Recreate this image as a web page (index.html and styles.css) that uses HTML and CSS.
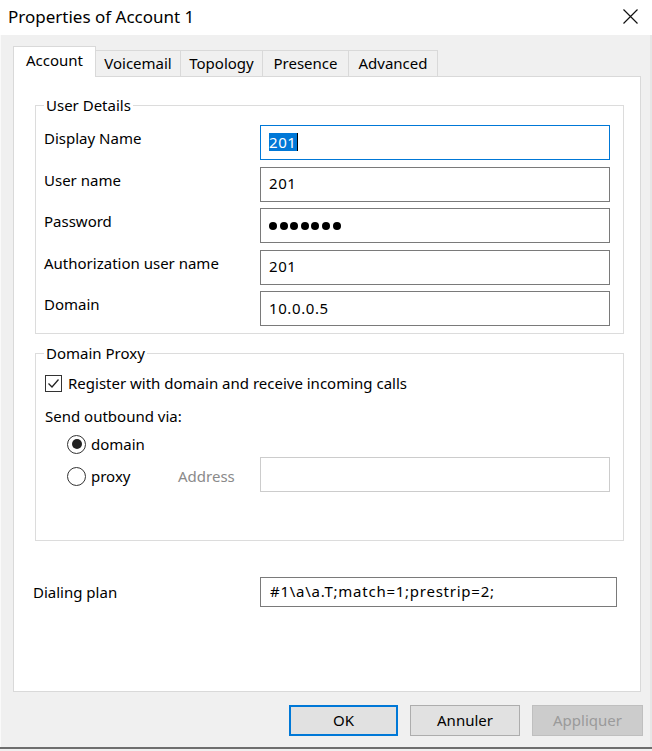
FILE: index.html
```html
<!DOCTYPE html>
<html lang="en">
<head>
<meta charset="utf-8">
<title>Properties of Account 1</title>
<link rel="stylesheet" href="styles.css">
</head>
<body>
<div class="window">
  <div class="titlebar">
    <span class="title">Properties of Account 1</span>
    <svg class="close" viewBox="0 0 15 15" aria-label="Close"><path d="M0.5 0.5 L14.5 14.5 M14.5 0.5 L0.5 14.5" stroke="#111" stroke-width="1.2" fill="none"/></svg>
  </div>
  <div class="client">
    <div class="tabs">
      <div class="tab tab-account active">Account</div>
      <div class="tab tab-voicemail">Voicemail</div>
      <div class="tab tab-topology">Topology</div>
      <div class="tab tab-presence">Presence</div>
      <div class="tab tab-advanced">Advanced</div>
    </div>
    <div class="panel">
      <fieldset class="group group-user">
        <legend>User Details</legend>
        <div class="form-grid">
          <label class="lbl">Display Name</label>
          <div class="field focused"><span class="sel">201</span><span class="caret"></span></div>
          <label class="lbl">User name</label>
          <div class="field">201</div>
          <label class="lbl">Password</label>
          <div class="field"><span class="dots"><i></i><i></i><i></i><i></i><i></i><i></i><i></i></span></div>
          <label class="lbl">Authorization user name</label>
          <div class="field">201</div>
          <label class="lbl">Domain</label>
          <div class="field">10.0.0.5</div>
        </div>
      </fieldset>
      <fieldset class="group group-proxy">
        <legend>Domain Proxy</legend>
        <div class="check-row">
          <span class="checkbox"><svg viewBox="0 0 15 15"><path d="M2.5 7.5 L6 11 L12.5 3.5" stroke="#222" stroke-width="1.3" fill="none"/></svg></span>
          <span>Register with domain and receive incoming calls</span>
        </div>
        <div class="send-row">Send outbound via:</div>
        <div class="radio-row">
          <span class="radio on"></span><span>domain</span>
        </div>
        <div class="radio-row proxy-row">
          <span class="radio"></span><span class="proxy-text">proxy</span><span class="addr">Address</span>
          <div class="field disabled"></div>
        </div>
      </fieldset>
      <div class="dial-row">
        <label class="dial-label">Dialing plan</label>
        <div class="field dial">#1\a\a.T;match=1;prestrip=2;</div>
      </div>
    </div>
    <div class="buttons">
      <button class="btn btn-ok">OK</button>
      <button class="btn btn-cancel">Annuler</button>
      <button class="btn btn-apply" disabled>Appliquer</button>
    </div>
  </div>
  <div class="edge"></div>
</div>
</body>
</html>
```

FILE: styles.css
```css
* { box-sizing: border-box; }
html, body { margin: 0; padding: 0; }
body {
  background: #f0f0f0;
  font-family: "Noto Sans", "Segoe UI", "DejaVu Sans", sans-serif;
  font-size: 15px;
  color: #000;
}
.window {
  width: 652px;
  height: 749px;
  display: flex;
  flex-direction: column;
  background: #f0f0f0;
}
.titlebar {
  height: 35px;
  flex: none;
  background: #fff;
  display: flex;
  align-items: center;
  justify-content: space-between;
  padding: 0 14px 2px 8px;
}
.title { font-size: 17px; }
.close { width: 15px; height: 15px; display: block; }

.client {
  flex: 1;
  display: flex;
  flex-direction: column;
  padding: 11px 0 0 12px;
  border-left: 1px solid #fafafa;
  border-right: 2px solid #e6e6e6;
}
.tabs {
  display: flex;
  align-items: flex-end;
  height: 30px;
}
.tab {
  height: 26px;
  border: 1px solid #d9d9d9;
  border-bottom: none;
  background: #f0f0f0;
  display: flex;
  align-items: center;
  justify-content: center;
  margin-left: -1px;
  padding-bottom: 1px;
}
.tab.active {
  height: 31px;
  margin-left: 0;
  margin-bottom: -1px;
  background: #fff;
  position: relative;
  z-index: 2;
  padding-bottom: 4px;
}
.tab-account { width: 83px; }
.tab-voicemail { width: 86px; }
.tab-topology { width: 83px; }
.tab-presence { width: 87px; }
.tab-advanced { width: 90px; }

.panel {
  width: 628px;
  height: 616px;
  align-self: flex-start;
  background: #fff;
  border: 1px solid #d9d9d9;
  padding: 18px 0 0 21px;
}
.group {
  margin: 0;
  border: 1px solid #dcdcdc;
  min-width: 0;
  width: 589px;
}
.group legend {
  padding: 0 2px;
  line-height: 20px;
}
.group-user { padding: 10px 13px 7px 8px; }
.form-grid {
  display: grid;
  grid-template-columns: 216px 350px;
  row-gap: 6.5px;
}
.lbl {
  line-height: 20px;
  margin-top: 3px;
  align-self: start;
}
.field {
  height: 35px;
  border: 1px solid #7a7a7a;
  background: #fff;
  display: flex;
  align-items: center;
  padding: 0 0 2px 8px;
  white-space: nowrap;
  letter-spacing: 0.6px;
}
.field.focused { border-color: #0078d7; }
.sel {
  background: #0078d7;
  color: #fff;
  line-height: 18px;
}
.caret {
  width: 1px;
  height: 18px;
  background: #000;
}
.dots { display: flex; gap: 2.6px; padding-top: 2px; }
.dots i {
  width: 8px;
  height: 8px;
  border-radius: 50%;
  background: #000;
  display: block;
}

.group-proxy {
  margin-top: 9px;
  padding: 10px 13px 48px 8px;
}
.check-row {
  height: 20px;
  display: flex;
  align-items: center;
}
.checkbox {
  width: 17px;
  height: 17px;
  margin: 1px 6px 0 1px;
  border: 1px solid #333;
  display: block;
}
.checkbox svg { width: 15px; height: 15px; display: block; }
.send-row {
  margin-top: 13px;
  height: 20px;
  line-height: 20px;
  padding-left: 1px;
}
.radio-row {
  margin-top: 8px;
  height: 20px;
  display: flex;
  align-items: center;
  padding-left: 23px;
}
.radio {
  width: 19px;
  height: 19px;
  border: 1px solid #333;
  border-radius: 50%;
  margin-right: 5px;
  display: flex;
  align-items: center;
  justify-content: center;
  flex: none;
}
.radio.on::after {
  content: "";
  width: 10px;
  height: 10px;
  border-radius: 50%;
  background: #222;
}
.proxy-row {
  margin-top: 3px;
  height: 35px;
}
.proxy-row > span { padding-top: 3px; }
.proxy-row .radio { margin-top: 3px; padding-top: 0; }
.proxy-text { width: 87px; }
.addr { width: 82px; color: #8a8a8a; }
.field.disabled {
  width: 350px;
  border-color: #cccccc;
}

.dial-row {
  margin-top: 36px;
  margin-left: -2px;
  display: flex;
  align-items: center;
}
.dial-label { width: 227px; }
.field.dial {
  width: 357px;
  height: 30px;
  padding-left: 9px;
  letter-spacing: 0.75px;
}

.buttons {
  display: flex;
  justify-content: flex-end;
  gap: 12px;
  margin-top: 13px;
  padding-right: 7px;
}
.btn {
  height: 31px;
  font-family: inherit;
  font-size: 15px;
  color: #000;
  background: #e1e1e1;
  border: 1px solid #adadad;
  padding: 0 0 2px 0;
}
.btn-ok { width: 109px; border: 2px solid #0078d7; }
.btn-cancel { width: 110px; }
.btn-apply {
  width: 111px;
  background: #cccccc;
  border-color: #bfbfbf;
  color: #9a9a9a;
}
.edge {
  height: 2px;
  flex: none;
  background: #6e6e6e;
}
```
